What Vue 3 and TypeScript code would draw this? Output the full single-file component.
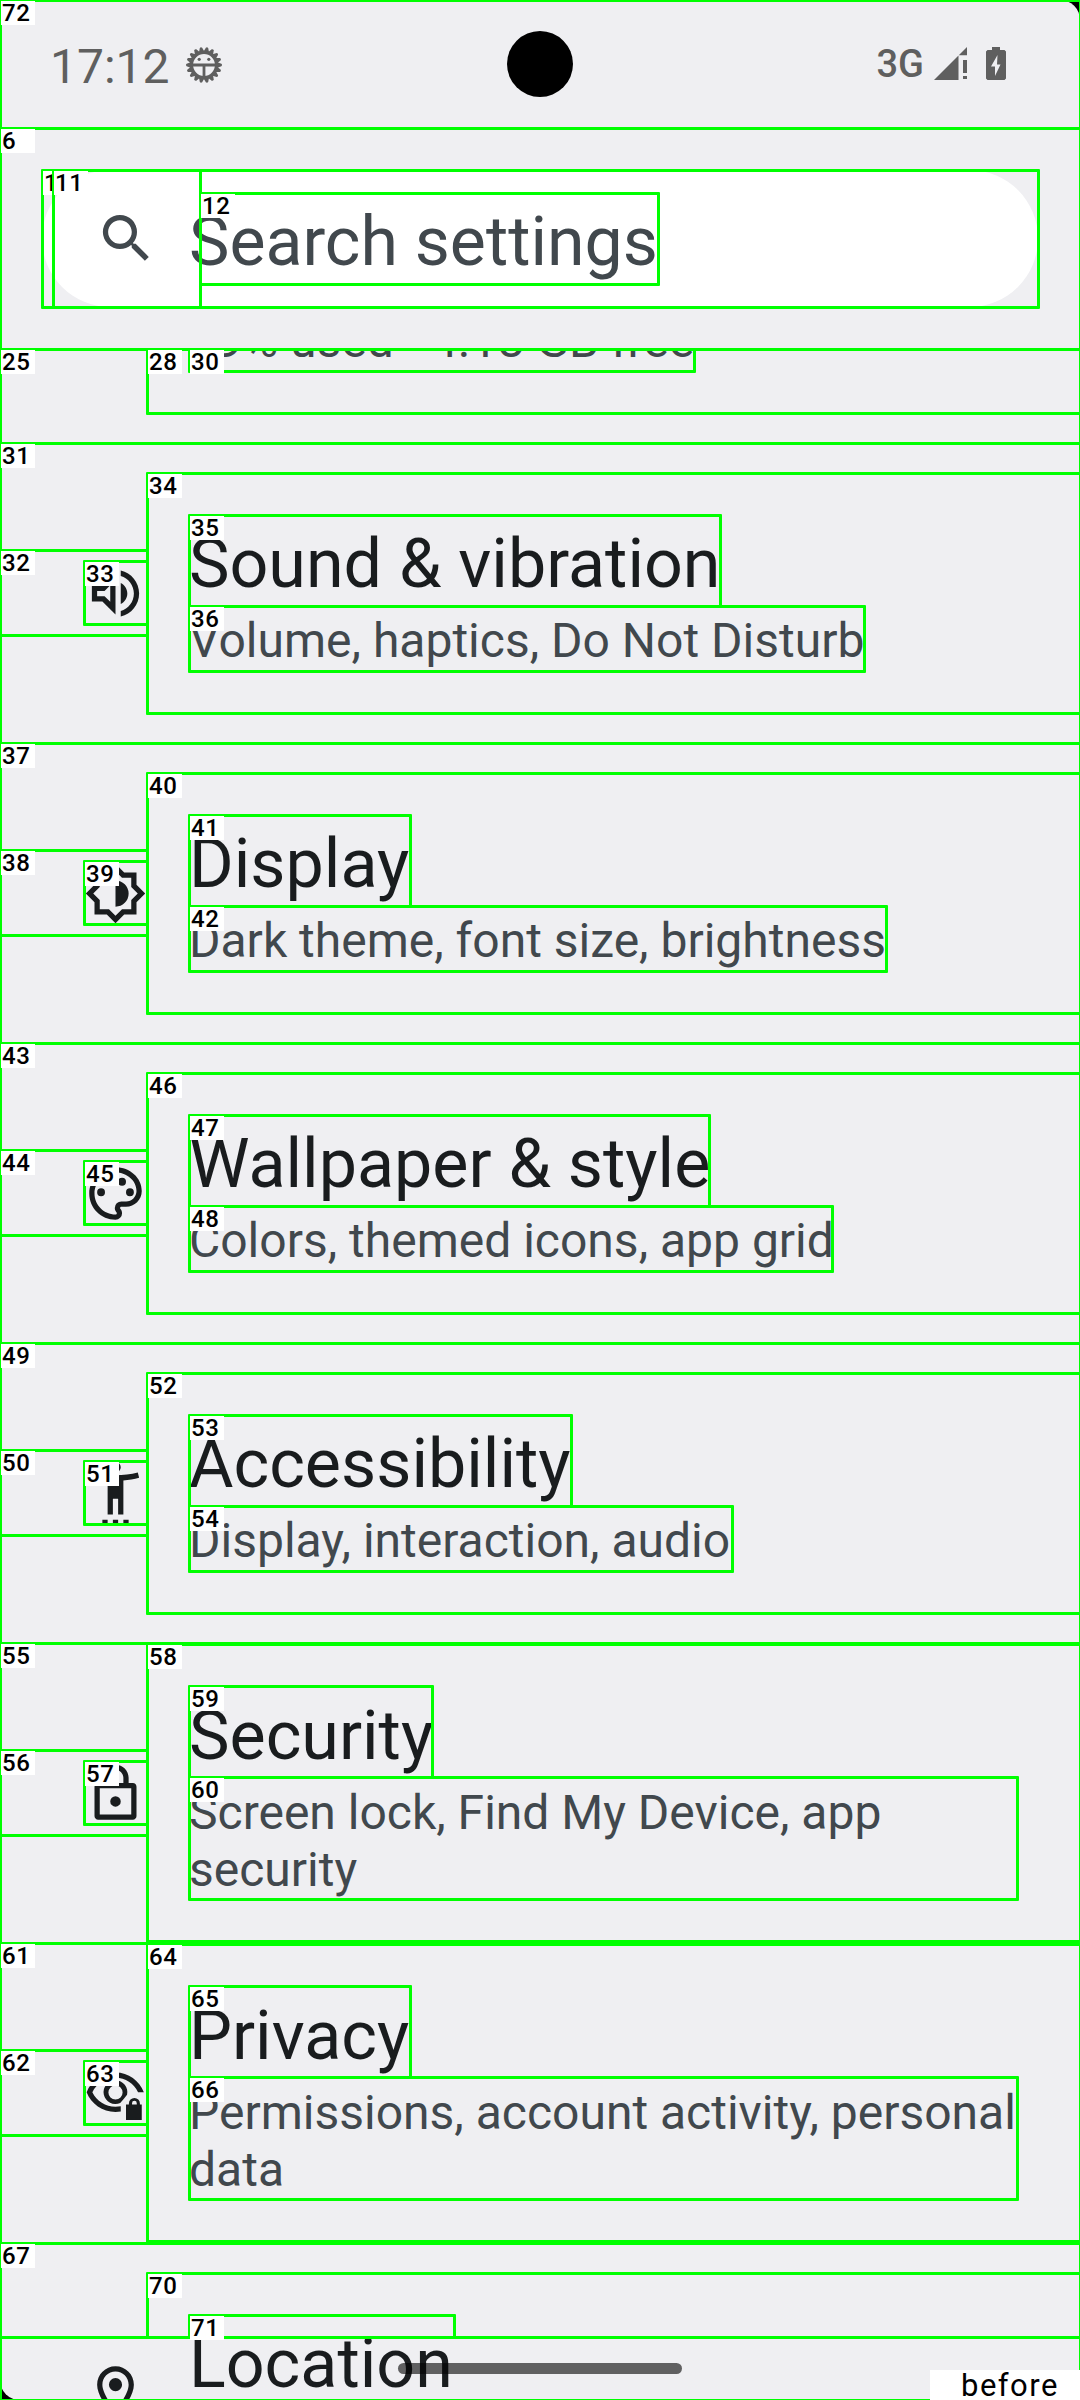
<script setup lang="ts">
interface Entry {
  title: string
  summary: string
  icon: string
  rule?: 'evenodd'
}

interface Mark {
  id: string
  l: number
  t: number
  r: number
  b: number
}

const entries: Entry[] = [
  {
    title: 'Sound & vibration',
    summary: 'Volume, haptics, Do Not Disturb',
    icon: 'M3 9v6h4l5 5V4L7 9H3zm7-.17v6.34L7.83 13H5v-2h2.83L10 8.83zM16.5 12c0-1.77-1.02-3.29-2.5-4.03v8.05c1.48-.73 2.5-2.25 2.5-4.02zM14 3.23v2.06c2.89.86 5 3.54 5 6.71s-2.11 5.85-5 6.71v2.06c4.01-.91 7-4.49 7-8.77s-2.99-7.86-7-8.77z',
  },
  {
    title: 'Display',
    summary: 'Dark theme, font size, brightness',
    icon: 'M20 15.31L23.31 12 20 8.69V4h-4.69L12 .69 8.69 4H4v4.69L.69 12 4 15.31V20h4.69L12 23.31 15.31 20H20v-4.69zM18 14.48V18h-3.52L12 20.48 9.52 18H6v-3.52L3.52 12 6 9.52V6h3.52L12 3.52 14.48 6H18v3.52L20.48 12 18 14.48zM12 7v10a5 5 0 0 0 0-10z',
    rule: 'evenodd',
  },
  {
    title: 'Wallpaper & style',
    summary: 'Colors, themed icons, app grid',
    icon: 'M12 22C6.49 22 2 17.51 2 12S6.49 2 12 2s10 4.04 10 9c0 3.31-2.69 6-6 6h-1.77c-.28 0-.5.22-.5.5 0 .12.05.23.13.33.41.47.64 1.06.64 1.67A2.5 2.5 0 0 1 12 22zm0-18c-4.41 0-8 3.59-8 8s3.59 8 8 8c.28 0 .5-.22.5-.5a.54.54 0 0 0-.14-.35c-.41-.46-.63-1.05-.63-1.65a2.5 2.5 0 0 1 2.5-2.5H16c2.21 0 4-1.79 4-4 0-3.86-3.59-7-8-7zM5 11.5a1.5 1.5 0 1 0 3 0a1.5 1.5 0 1 0-3 0zM8 7.5a1.5 1.5 0 1 0 3 0a1.5 1.5 0 1 0-3 0zM13 7.5a1.5 1.5 0 1 0 3 0a1.5 1.5 0 1 0-3 0zM16 11.5a1.5 1.5 0 1 0 3 0a1.5 1.5 0 1 0-3 0z',
    rule: 'evenodd',
  },
  {
    title: 'Accessibility',
    summary: 'Display, interaction, audio',
    icon: 'M20.5 4c-2.61.7-5.67 1-8.5 1s-5.89-.3-8.5-1L3 6c1.86.5 4 .83 6 1v13h2v-6h2v6h2V7c2-.17 4.14-.5 6-1l-.5-2zM12 4a2 2 0 1 0 0-4a2 2 0 0 0 0 4zM7 24h2v-2H7v2zm4 0h2v-2h-2v2zm4 0h2v-2h-2v2z',
  },
  {
    title: 'Security',
    summary: 'Screen lock, Find My Device, app\nsecurity',
    icon: 'M18.6 8H17V6c0-2.76-2.24-5-5-5S7 3.24 7 6v2H5.4C4.6 8 4 8.6 4 9.4v11.2c0 .8.6 1.4 1.4 1.4h13.2c.8 0 1.4-.6 1.4-1.4V9.4c0-.8-.6-1.4-1.4-1.4zM9 6c0-1.66 1.34-3 3-3s3 1.34 3 3v2H9V6zm9 14H6V10h12v10zm-6-3a2 2 0 1 0 0-4a2 2 0 0 0 0 4z',
    rule: 'evenodd',
  },
  {
    title: 'Privacy',
    summary: 'Permissions, account activity, personal\ndata',
    icon: 'M22.8 11.5C21.07 7.11 17 4 12 4S2.73 7.11 1 11.5C2.73 15.89 7 19 12 19c.68 0 1.35-.06 2-.17V16.83c-.65.11-1.32.17-2 .17-3.79 0-7.17-2.13-8.82-5.5C4.83 8.13 8.21 6 12 6s7 2.13 8.6 5.5zM12 7a4.5 4.5 0 1 0 1.8 8.6L15.2 14 16.4 12.5A4.5 4.5 0 0 0 12 7zM12 8.9a2.7 2.7 0 1 1 0 5.4a2.7 2.7 0 1 1 0-5.4zM21.3 16.2V15.8a2.1 2.1 0 0 0-4.2 0v.4H16v5.9h6v-5.9zM18.3 16.2v-.5a.9.9 0 0 1 1.8 0v.5z',
    rule: 'evenodd',
  },
  {
    title: 'Location',
    summary: '',
    icon: 'M12 2C8.13 2 5 5.13 5 9c0 5.25 7 13 7 13s7-7.75 7-13c0-3.87-3.13-7-7-7zM7 9c0-2.76 2.24-5 5-5s5 2.24 5 5c0 2.88-2.88 7.19-5 9.88C9.92 16.21 7 11.85 7 9zM9.5 9a2.5 2.5 0 1 0 5 0a2.5 2.5 0 1 0-5 0z',
    rule: 'evenodd',
  },
]

const marks: Mark[] = [
  { id: '72', l: 0, t: 0, r: 1080, b: 2400 },
  { id: '6', l: 0, t: 128, r: 1080, b: 349 },
  { id: '1', l: 42, t: 170, r: 1038, b: 307 },
  { id: '11', l: 53, t: 170, r: 200, b: 307 },
  { id: '12', l: 200, t: 193, r: 658, b: 284 },
  { id: '25', l: 0, t: 349, r: 1080, b: 443 },
  { id: '28', l: 147, t: 349, r: 1080, b: 413 },
  { id: '30', l: 189, t: 349, r: 694, b: 371 },
]

// Each list row contributes a row, icon frame, icon, text column, title and summary mark.
const titleRight = [720, 410, 709, 571, 432, 410]
const summaryRight = [864, 886, 832, 732, 1017, 1017]
titleRight.forEach((right, i) => {
  const top = 443 + i * 300
  const id = 31 + i * 6
  const tall = i > 3
  const textTop = tall ? top + 43 : top + 72
  marks.push(
    { id: `${id}`, l: 0, t: top, r: 1080, b: top + 300 },
    { id: `${id + 1}`, l: 0, t: top + 107, r: 147, b: top + 192 },
    { id: `${id + 2}`, l: 84, t: top + 118, r: 147, b: top + 181 },
    { id: `${id + 3}`, l: 147, t: tall ? top + 1 : top + 30, r: 1080, b: tall ? top + 298 : top + 270 },
    { id: `${id + 4}`, l: 189, t: textTop, r: right, b: textTop + 91 },
    { id: `${id + 5}`, l: 189, t: textTop + 91, r: summaryRight[i], b: textTop + (tall ? 213 : 156) },
  )
})
marks.push(
  { id: '67', l: 0, t: 2243, r: 1080, b: 2337 },
  { id: '70', l: 147, t: 2273, r: 1080, b: 2337 },
  { id: '71', l: 189, t: 2315, r: 454, b: 2337 },
)

const teeth = Array.from({ length: 18 }, (_, i) => i * 20 + 10)
</script>

<template>
  <div class="frame">
    <div class="screen">
      <header class="status">
        <span class="clock">17:12</span>
        <svg class="bug" viewBox="0 0 36 36">
          <path v-for="a in teeth" :key="a" d="M14.8 6L16.8.6Q18-.6 19.2.6L21.2 6z" :transform="`rotate(${a} 18 18)`" />
          <circle cx="18" cy="18" r="12.6" fill="none" stroke="#5f5f5f" stroke-width="3.4" />
          <path d="M5 16.6h26v2.8H19.4V31h-2.8V19.4H5z" />
          <circle cx="13.2" cy="12.3" r="1.6" />
          <circle cx="22.8" cy="12.3" r="1.6" />
        </svg>
        <span class="gap"></span>
        <span class="net">3G</span>
        <svg class="signal" viewBox="0 0 33 33">
          <path d="M0 33L24.5 8.5V33zM25 8L33 0v8.3h-8zM29 13h4v13h-4zM29 29h4v3h-4z" />
        </svg>
        <svg class="battery" viewBox="0 0 20 33">
          <path fill-rule="evenodd" d="M6 0h8v3h4.5L20 4.5V31.5L18.5 33H1.5L0 31.5V4.5L1.5 3H6zM11.5 8L5 19.5h4V29L14.5 17.5h-3.5z" />
        </svg>
        <i class="camera"></i>
      </header>

      <div class="search-area">
        <div class="search">
          <svg viewBox="0 0 24 24">
            <path d="M15.5 14h-.79l-.28-.27A6.471 6.471 0 0 0 16 9.5 6.5 6.5 0 1 0 9.5 16c1.61 0 3.09-.59 4.23-1.57l.27.28v.79l5 4.99L20.49 19l-4.99-5zm-6 0C7.01 14 5 11.99 5 9.5S7.01 5 9.5 5 14 7.01 14 9.5 11.99 14 9.5 14z" />
          </svg>
          <span>Search settings</span>
        </div>
      </div>

      <main class="list">
        <div class="row clipped">
          <p class="summary">39% used - 4.18 GB free</p>
        </div>
        <section v-for="e in entries" :key="e.title" class="row" :class="{ last: !e.summary }">
          <div class="icon">
            <svg viewBox="0 0 24 24"><path :d="e.icon" :fill-rule="e.rule" /></svg>
          </div>
          <div class="text">
            <h2>{{ e.title }}</h2>
            <p v-if="e.summary" class="summary">{{ e.summary }}</p>
          </div>
        </section>
      </main>
      <i class="handle"></i>
    </div>

    <template v-for="m in marks" :key="m.id">
      <div class="box" :style="{ left: `${m.l - 1}px`, top: `${m.t - 1}px`, width: `${m.r - m.l + 3}px`, height: `${m.b - m.t + 3}px` }"></div>
      <div class="tag" :style="{ left: `${m.l + 1}px`, top: `${m.t + 1}px` }">{{ m.id }}</div>
    </template>
    <div class="caption">before</div>
  </div>
</template>

<style>
body {
  margin: 0;
  background: #000;
}
</style>

<style scoped>
.frame {
  position: relative;
  width: 1080px;
  height: 2400px;
  overflow: hidden;
  background: #000;
  font-family: Roboto, "Liberation Sans", sans-serif;
}
.screen {
  position: relative;
  height: 2400px;
  display: flex;
  flex-direction: column;
  overflow: hidden;
  border-radius: 20px;
  background: #efeff2;
}
.status {
  position: relative;
  box-sizing: border-box;
  flex: none;
  height: 128px;
  display: flex;
  align-items: flex-start;
  padding: 0 74px 0 50px;
  color: #5f5f5f;
}
.status svg {
  fill: #5f5f5f;
}
.clock {
  width: 136px;
  padding-top: 39px;
  font-size: 48px;
  line-height: 56px;
}
.bug {
  width: 36px;
  height: 36px;
  margin-top: 47px;
}
.gap {
  flex: 1;
}
.net {
  margin-right: 10px;
  padding-top: 42px;
  font-size: 38px;
  line-height: 44px;
  font-weight: 500;
}
.signal {
  width: 33px;
  height: 33px;
  margin-top: 47px;
  margin-right: 19px;
}
.battery {
  width: 20px;
  height: 33px;
  margin-top: 47px;
}
.camera {
  position: absolute;
  left: 507px;
  top: 31px;
  width: 66px;
  height: 66px;
  border-radius: 50%;
  background: #000;
}
.search-area {
  flex: none;
  box-sizing: border-box;
  height: 221px;
  padding: 42px;
}
.search {
  display: flex;
  align-items: center;
  width: 996px;
  height: 137px;
  border-radius: 69px;
  background: #fff;
  color: #41484d;
}
.search svg {
  width: 63px;
  height: 63px;
  margin: 0 31px 0 53px;
  fill: #41484d;
}
.search span {
  padding-top: 6px;
  font-size: 68px;
  line-height: 80px;
  white-space: nowrap;
}
.list {
  flex: 1;
  min-height: 0;
  overflow: hidden;
}
.row {
  display: flex;
  align-items: center;
  height: 300px;
}
.row.clipped {
  height: 94px;
  padding-left: 189px;
  align-items: flex-end;
  box-sizing: border-box;
  padding-bottom: 72px;
}
.row.last {
  align-items: flex-start;
}
.row.last .icon {
  padding-top: 118px;
}
.row.last .text {
  padding-top: 72px;
}
.icon {
  flex: none;
  width: 147px;
  display: flex;
  justify-content: flex-end;
}
.icon svg {
  width: 63px;
  height: 63px;
  fill: #191c1e;
}
.text {
  padding-left: 42px;
}
h2 {
  margin: 0;
  padding-top: 7px;
  font-size: 68.2px;
  line-height: 84px;
  font-weight: 400;
  color: #191c1e;
  white-space: nowrap;
}
.summary {
  margin: 0;
  padding: 6px 0 2px;
  font-size: 48px;
  line-height: 57px;
  color: #41484d;
  white-space: pre;
}
.handle {
  position: absolute;
  left: 398px;
  top: 2363px;
  width: 284px;
  height: 11px;
  border-radius: 6px;
  background: rgba(0, 0, 0, 0.6);
}
.box {
  position: absolute;
  box-sizing: border-box;
  border: 3px solid #0f0;
  border-radius: 1px;
}
.tag {
  position: absolute;
  box-sizing: border-box;
  width: 34px;
  height: 24px;
  padding-left: 1px;
  overflow: hidden;
  background: #fff;
  color: #000;
  font-size: 24px;
  line-height: 25px;
  font-weight: 500;
  letter-spacing: 0.6px;
}
.caption {
  position: absolute;
  left: 930px;
  top: 2370px;
  width: 150px;
  height: 30px;
  box-sizing: border-box;
  padding-left: 31px;
  background: #fff;
  color: #000;
  font-size: 31px;
  line-height: 32px;
  letter-spacing: 1.5px;
}
</style>
